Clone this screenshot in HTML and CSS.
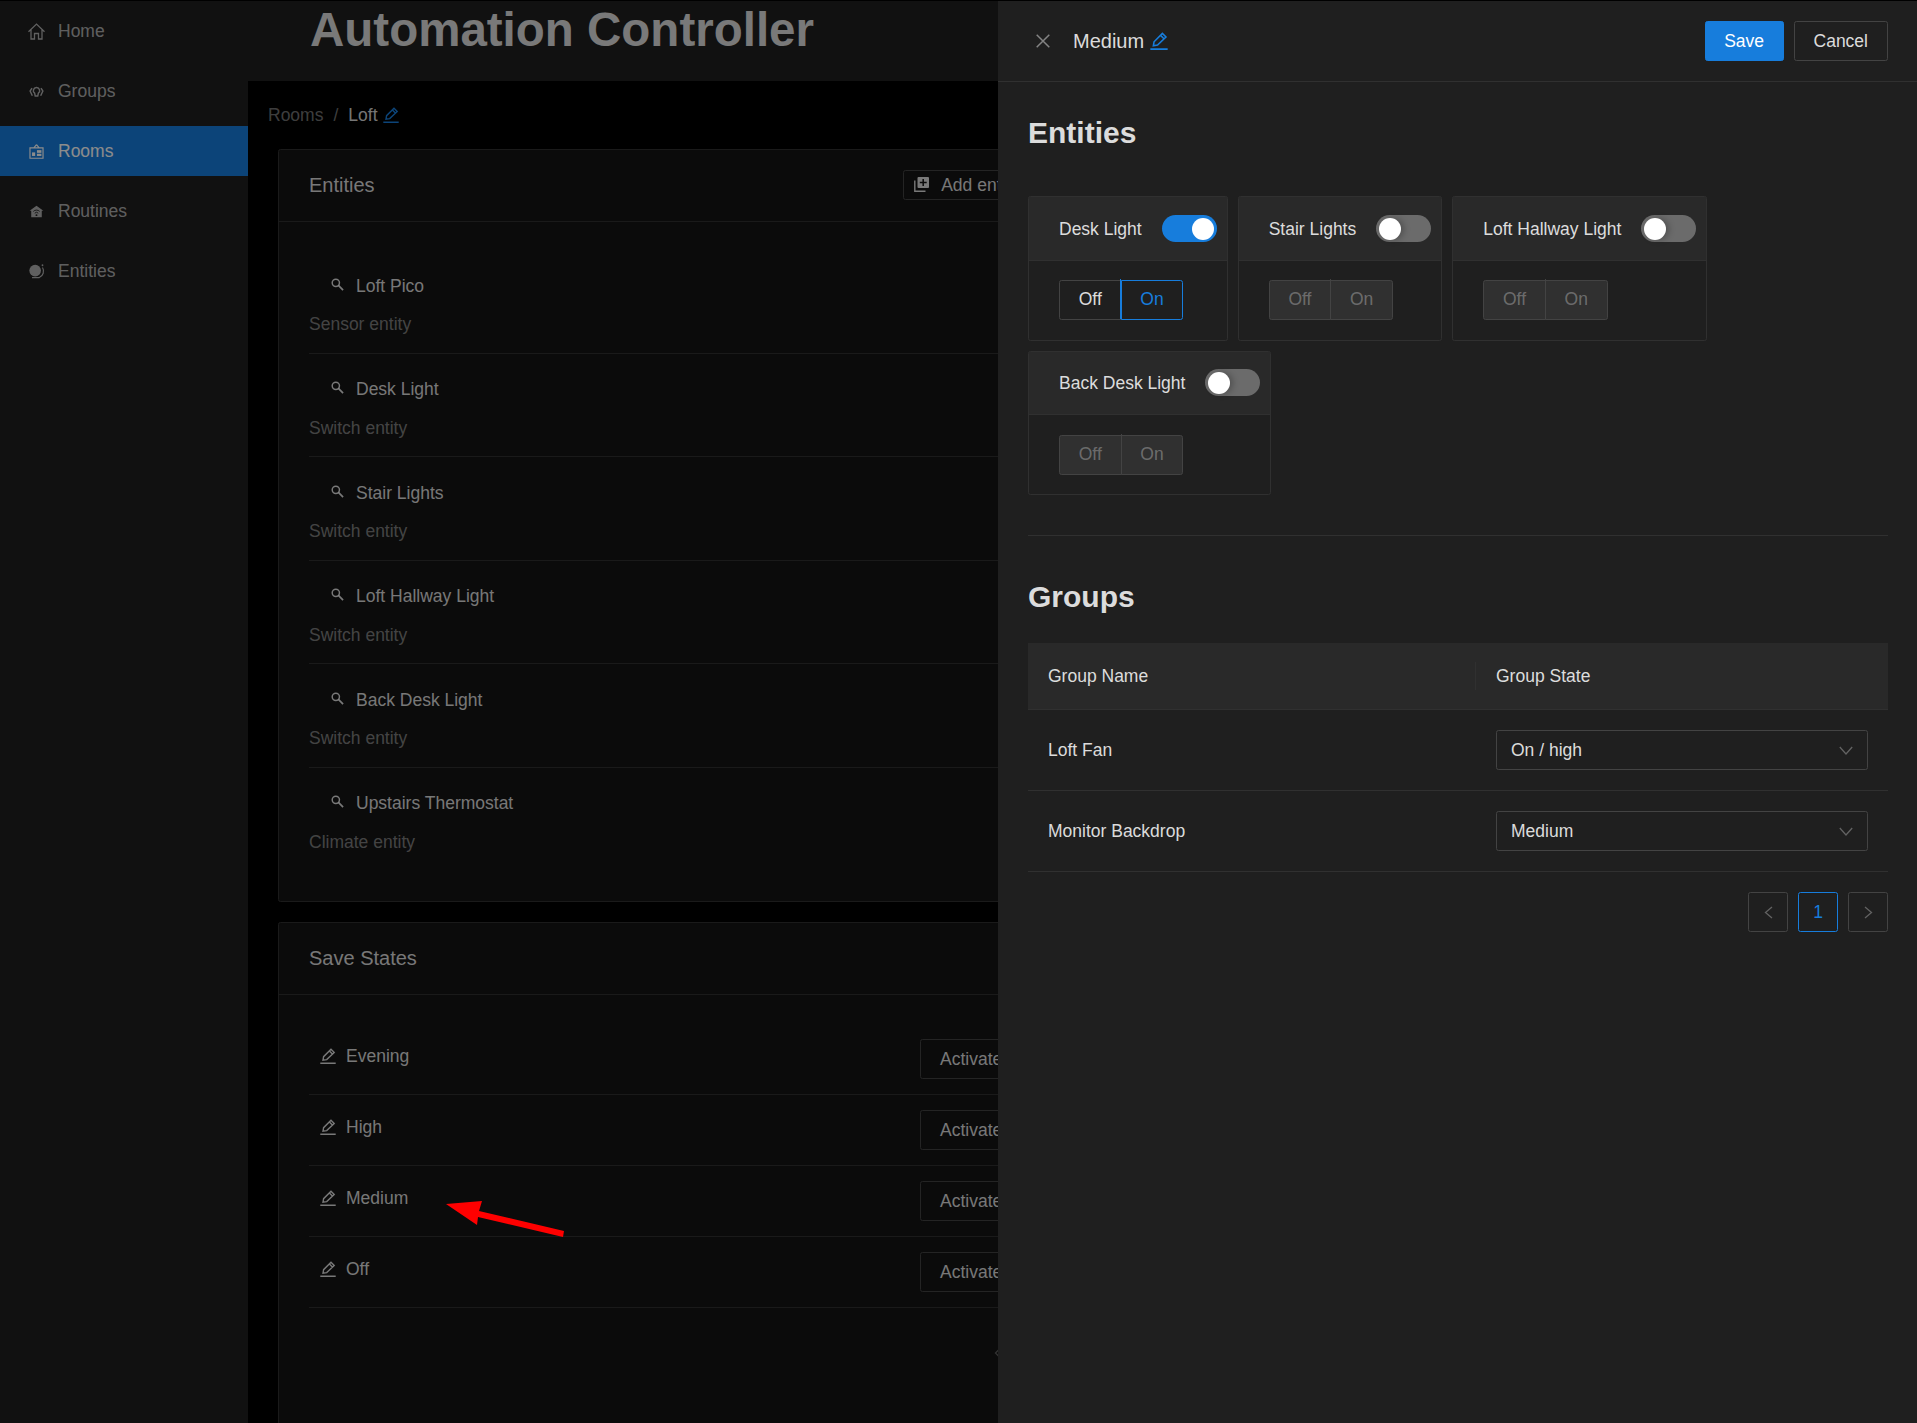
FILE: index.html
```html
<!DOCTYPE html>
<html lang="en">
<head>
  <meta charset="UTF-8">
  <meta name="viewport" content="width=device-width, initial-scale=1.0">
  <title>Automation Controller</title>
  <link rel="stylesheet" href="styles.css">
</head>
<body>

  <svg class="icon-defs" width="0" height="0">
    <symbol id="pencil" viewBox="0 0 16 16">
      <path d="M3 12.2 L3.6 8.7 L11 1.2 L14.2 4.4 L6.7 11.6 Z M9.4 3 L12.4 6 M0.3 15.2 H15.7" fill="none" stroke="currentColor" stroke-width="1.4"/>
    </symbol>
    <symbol id="search" viewBox="0 0 14 14">
      <circle cx="5.2" cy="5.2" r="3.9" fill="none" stroke="currentColor" stroke-width="1.6"/>
      <path d="M8 8 L13 13" stroke="currentColor" stroke-width="1.9"/>
    </symbol>
  </svg>

  <div class="page">
    <!-- left menu -->
    <nav class="sidebar">
      <a class="menu-item">
        <svg class="menu-icon" viewBox="0.5 0.5 17 17"><path d="M1 9.2 L9 1.6 L17 9.2 M3.5 7 V16.5 H7 V11 H11 V16.5 H14.5 V7" fill="none" stroke="currentColor" stroke-width="1.3"/></svg>
        Home
      </a>
      <a class="menu-item">
        <svg class="menu-icon" viewBox="-1.5 -4.5 20 20"><path d="M8.5 0.8 a3.7 3.7 0 0 0 -2.2 6.7 L7 10.8 H10 L10.7 7.5 A3.7 3.7 0 0 0 8.5 0.8 Z M3.2 1.5 L1 5 L3.6 10.5 M13.8 1.5 L16 5 L13.4 10.5" fill="none" stroke="currentColor" stroke-width="1.7"/></svg>
        Groups
      </a>
      <a class="menu-item active">
        <svg class="menu-icon" viewBox="-1 -1 19 19"><path d="M8.5 0.8 L5.5 4.5 M8.5 0.8 L11.5 4.5 M1.2 4.5 H15.8 V16 H1.2 Z" fill="none" stroke="currentColor" stroke-width="1.3"/><rect x="3.5" y="9.5" width="3.5" height="4" fill="currentColor"/><rect x="9" y="7" width="5" height="3" fill="currentColor"/><rect x="9" y="11" width="5" height="2.5" fill="currentColor"/></svg>
        Rooms
      </a>
      <a class="menu-item">
        <svg class="menu-icon" viewBox="-2 -3 21 21"><path d="M8.5 0.5 L17 6.5 H15 V14.5 H2 V6.5 H0 Z" fill="currentColor"/><path d="M4.6 7.4 a5.5 5.5 0 0 1 7.8 0 M6.3 9.6 a3 3 0 0 1 4.4 0" fill="none" stroke="#1f1f1f" stroke-width="1.1"/><circle cx="8.5" cy="12" r="1.2" fill="#1f1f1f"/></svg>
        Routines
      </a>
      <a class="menu-item">
        <svg class="menu-icon" viewBox="-1 -1 19 19"><circle cx="7" cy="7.5" r="6.5" fill="currentColor"/><circle cx="15.2" cy="1.5" r="1" fill="currentColor"/><path d="M15.2 4 a7.8 7.8 0 0 1 -3.6 11.3 H3.5" fill="none" stroke="currentColor" stroke-width="1.3"/></svg>
        Entities
      </a>
    </nav>

    <div class="main">
      <header class="app-header">
        <h1>Automation Controller</h1>
      </header>

      <main class="content">
        <div class="breadcrumb">
          <span class="crumb-parent">Rooms</span>
          <span class="crumb-sep">/</span>
          <span class="crumb-current">Loft</span>
          <svg class="pencil link"><use href="#pencil"/></svg>
        </div>

        <section class="card">
          <div class="card-head">
            <span>Entities</span>
            <button class="btn-small">
              <svg class="add-icon" viewBox="0 0 15 15"><path d="M3.5 1 a1 1 0 0 1 1-1 H14 a1 1 0 0 1 1 1 V10 a1 1 0 0 1 -1 1 H4.5 a1 1 0 0 1 -1-1 Z" fill="currentColor"/><path d="M9.2 2 V9 M5.8 5.5 H12.7" stroke="#141414" stroke-width="1.5"/><path d="M0.8 3.5 V14.2 H11.5" fill="none" stroke="currentColor" stroke-width="1.4"/></svg>
              Add entity
            </button>
          </div>
          <div class="card-body entity-list">
            <div class="entity-row">
              <div class="entity-name"><svg class="search"><use href="#search"/></svg>Loft Pico</div>
              <div class="entity-type">Sensor entity</div>
            </div>
            <div class="entity-row">
              <div class="entity-name"><svg class="search"><use href="#search"/></svg>Desk Light</div>
              <div class="entity-type">Switch entity</div>
            </div>
            <div class="entity-row">
              <div class="entity-name"><svg class="search"><use href="#search"/></svg>Stair Lights</div>
              <div class="entity-type">Switch entity</div>
            </div>
            <div class="entity-row">
              <div class="entity-name"><svg class="search"><use href="#search"/></svg>Loft Hallway Light</div>
              <div class="entity-type">Switch entity</div>
            </div>
            <div class="entity-row">
              <div class="entity-name"><svg class="search"><use href="#search"/></svg>Back Desk Light</div>
              <div class="entity-type">Switch entity</div>
            </div>
            <div class="entity-row last">
              <div class="entity-name"><svg class="search"><use href="#search"/></svg>Upstairs Thermostat</div>
              <div class="entity-type">Climate entity</div>
            </div>
          </div>
        </section>

        <section class="card states-card">
          <div class="card-head"><span>Save States</span></div>
          <div class="card-body state-list">
            <div class="state-row">
              <div class="state-name"><svg class="pencil"><use href="#pencil"/></svg>Evening</div>
              <button class="btn-activate">Activate</button>
            </div>
            <div class="state-row">
              <div class="state-name"><svg class="pencil"><use href="#pencil"/></svg>High</div>
              <button class="btn-activate">Activate</button>
            </div>
            <div class="state-row">
              <div class="state-name"><svg class="pencil"><use href="#pencil"/></svg>Medium</div>
              <button class="btn-activate">Activate</button>
            </div>
            <div class="state-row">
              <div class="state-name"><svg class="pencil"><use href="#pencil"/></svg>Off</div>
              <button class="btn-activate">Activate</button>
            </div>
            <svg class="stub-chevron" viewBox="0 0 8 12"><path d="M6.5 1 L1.5 6 L6.5 11" fill="none" stroke="currentColor" stroke-width="1.4"/></svg>
          </div>
        </section>
      </main>
    </div>

    <div class="mask"></div>

    <!-- annotation on top of the dimmed page -->
    <svg class="arrow" viewBox="0 0 120 40" width="120" height="40">
      <path d="M1 4 L37 1 L34 11 L119 31 L118 37 L33 17 L32 25 Z" fill="#ff0000"/>
    </svg>

    <!-- drawer -->
    <aside class="drawer">
      <div class="drawer-head">
        <div class="drawer-title">
          <svg class="close-icon" viewBox="0 0 14 14"><path d="M0.7 0.7 L13.3 13.3 M13.3 0.7 L0.7 13.3" stroke="currentColor" stroke-width="1.5"/></svg>
          <span>Medium</span>
          <svg class="pencil title-pencil"><use href="#pencil"/></svg>
        </div>
        <div class="drawer-actions">
          <button class="btn btn-primary">Save</button>
          <button class="btn">Cancel</button>
        </div>
      </div>

      <div class="drawer-body">
        <h2 class="first-title">Entities</h2>
        <div class="tiles">
          <div class="tile">
            <div class="tile-head">
              <span>Desk Light</span>
              <span class="switch on"><span class="knob"></span></span>
            </div>
            <div class="tile-body">
              <div class="radio-group">
                <span class="radio">Off</span>
                <span class="radio radio-selected">On</span>
              </div>
            </div>
          </div>
          <div class="tile">
            <div class="tile-head">
              <span>Stair Lights</span>
              <span class="switch"><span class="knob"></span></span>
            </div>
            <div class="tile-body">
              <div class="radio-group disabled">
                <span class="radio">Off</span>
                <span class="radio">On</span>
              </div>
            </div>
          </div>
          <div class="tile">
            <div class="tile-head">
              <span>Loft Hallway Light</span>
              <span class="switch"><span class="knob"></span></span>
            </div>
            <div class="tile-body">
              <div class="radio-group disabled">
                <span class="radio">Off</span>
                <span class="radio">On</span>
              </div>
            </div>
          </div>
          <div class="tile">
            <div class="tile-head">
              <span>Back Desk Light</span>
              <span class="switch"><span class="knob"></span></span>
            </div>
            <div class="tile-body">
              <div class="radio-group disabled">
                <span class="radio">Off</span>
                <span class="radio">On</span>
              </div>
            </div>
          </div>
        </div>

        <hr class="divider">

        <h2>Groups</h2>
        <table class="groups">
          <thead>
            <tr>
              <th class="col-name">Group Name</th>
              <th class="col-state">Group State</th>
            </tr>
          </thead>
          <tbody>
            <tr>
              <td>Loft Fan</td>
              <td>
                <div class="select">On / high
                  <svg class="select-arrow" viewBox="0 0 14 9"><path d="M0.8 1 L7 8 L13.2 1" fill="none" stroke="currentColor" stroke-width="1.3"/></svg>
                </div>
              </td>
            </tr>
            <tr>
              <td>Monitor Backdrop</td>
              <td>
                <div class="select">Medium
                  <svg class="select-arrow" viewBox="0 0 14 9"><path d="M0.8 1 L7 8 L13.2 1" fill="none" stroke="currentColor" stroke-width="1.3"/></svg>
                </div>
              </td>
            </tr>
          </tbody>
        </table>

        <div class="pagination">
          <span class="page-btn"><svg viewBox="0 0 9 13"><path d="M8 1 L1.5 6.5 L8 12" fill="none" stroke="currentColor" stroke-width="1.3"/></svg></span>
          <span class="page-btn current">1</span>
          <span class="page-btn"><svg viewBox="0 0 9 13"><path d="M1 1 L7.5 6.5 L1 12" fill="none" stroke="currentColor" stroke-width="1.3"/></svg></span>
        </div>
      </div>
    </aside>
  </div>

</body>
</html>
```

FILE: styles.css
```css
* {
  box-sizing: border-box;
}
html, body {
  margin: 0;
  height: 100%;
  overflow: hidden;
}
body {
  font-family: "Liberation Sans", Arial, sans-serif;
  font-size: 17.5px;
  line-height: 24px;
  color: rgba(255, 255, 255, 0.85);
  background: #000;
}
button {
  font: inherit;
  color: inherit;
  background: transparent;
}
.icon-defs {
  position: absolute;
}

.page {
  position: relative;
  display: flex;
  height: 1423px;
  border-top: 1px solid #000;
  overflow: hidden;
}

/* left menu */
.sidebar {
  flex: 0 0 248px;
  padding-top: 5px;
  background: #1f1f1f;
}
.menu-item {
  display: flex;
  align-items: center;
  gap: 13px;
  height: 50px;
  margin-bottom: 10px;
  padding-left: 28px;
  color: rgba(255, 255, 255, 0.65);
}
.menu-item.active {
  background: #177ddc;
  color: #fff;
}
.menu-icon {
  width: 17px;
  height: 17px;
  flex: none;
}

/* main column */
.main {
  flex: 1;
  min-width: 0;
}
.app-header {
  height: 80px;
  padding-left: 62px;
  background: #1f1f1f;
}
.app-header h1 {
  margin: 0;
  font-size: 47.5px;
  line-height: 58px;
  font-weight: 700;
}
.content {
  padding: 22px 20px 0;
}
.breadcrumb {
  display: flex;
  align-items: center;
  height: 24px;
  margin-bottom: 22px;
}
.crumb-parent,
.crumb-sep {
  color: rgba(255, 255, 255, 0.45);
}
.crumb-sep {
  margin: 0 10px;
}
.pencil {
  width: 16px;
  height: 16px;
  flex: none;
}
.pencil.link {
  margin-left: 5px;
  color: #177ddc;
}

.card {
  width: 783px;
  margin: 0 0 20px 10px;
  background: #141414;
  border: 1px solid #303030;
  border-radius: 2.5px;
}
.states-card {
  min-height: 700px;
}
.card-head {
  display: flex;
  align-items: center;
  justify-content: space-between;
  height: 72px;
  padding: 0 30px 2px;
  font-size: 20px;
  border-bottom: 1px solid #303030;
}
.states-card .card-head {
  padding-bottom: 1px;
}
.btn-small {
  display: flex;
  align-items: center;
  gap: 12px;
  height: 30px;
  padding: 0 10px;
  font-size: 17.5px;
  border: 1px solid #434343;
  border-radius: 2.5px;
}
.add-icon {
  width: 15px;
  height: 15px;
}

.entity-list {
  padding: 28.3px 30px 29.7px;
}
.entity-row {
  height: 103.5px;
  padding-top: 23.5px;
  border-bottom: 1px solid #303030;
}
.entity-row.last {
  border-bottom: none;
}
.entity-name {
  display: flex;
  align-items: center;
  gap: 12px;
  padding-left: 22px;
}
.search {
  width: 13px;
  height: 13px;
  margin-top: -3px;
  flex: none;
}
.entity-type {
  margin-top: 14.5px;
  color: rgba(255, 255, 255, 0.45);
}

.state-list {
  padding: 29px 30px 0;
}
.state-row {
  display: flex;
  justify-content: space-between;
  height: 71px;
  padding-top: 15px;
  border-bottom: 1px solid #303030;
}
.state-name {
  display: flex;
  align-items: center;
  gap: 10px;
  height: 34px;
  padding-left: 11px;
}
.btn-activate {
  width: 110px;
  height: 40px;
  padding: 0 0 0 19px;
  text-align: left;
  border: 1px solid #434343;
  border-radius: 2.5px;
}
.stub-chevron {
  display: block;
  width: 8px;
  height: 12px;
  margin: 39px 0 0 685px;
  color: rgba(255, 255, 255, 0.3);
}

.mask {
  position: absolute;
  inset: 0;
  background: rgba(0, 0, 0, 0.45);
}
.arrow {
  position: absolute;
  left: 445px;
  top: 1199px;
}

/* drawer */
.drawer {
  position: absolute;
  top: 0;
  right: 0;
  bottom: 0;
  width: 919px;
  background: #1f1f1f;
}
.drawer-head {
  display: flex;
  align-items: center;
  justify-content: space-between;
  height: 81px;
  padding: 0 29px 0 38px;
  border-bottom: 1px solid #303030;
}
.drawer-title {
  display: flex;
  align-items: center;
  font-size: 20px;
}
.close-icon {
  width: 14px;
  height: 14px;
  margin-right: 23px;
  color: rgba(255, 255, 255, 0.45);
}
.title-pencil {
  width: 18px;
  height: 18px;
  margin-left: 6px;
  color: #177ddc;
}
.drawer-actions {
  display: flex;
  gap: 10px;
}
.btn {
  height: 40px;
  padding: 0 19px;
  border: 1px solid #434343;
  border-radius: 2.5px;
}
.btn-primary {
  padding: 0 18.5px;
  background: #177ddc;
  border-color: #177ddc;
  color: #fff;
}

.drawer-body {
  padding: 31px 29px 0 30px;
}
.drawer-body h2 {
  margin: 0 0 25px;
  font-size: 30px;
  line-height: 40.5px;
  font-weight: 700;
}
.drawer-body h2.first-title {
  margin-bottom: 42px;
}
.tiles {
  display: flex;
  flex-wrap: wrap;
  gap: 10px;
}
.tile {
  border: 1px solid #303030;
  border-radius: 2.5px;
}
.tile-head {
  display: flex;
  align-items: center;
  justify-content: space-between;
  gap: 20px;
  height: 64px;
  padding: 1px 10px 0 30px;
  background: #292929;
  border-bottom: 1px solid #303030;
}
.tile:last-child .tile-head {
  height: 63px;
  padding-top: 0;
}
.tile-body {
  padding: 19px 30px 20px;
}
.tile:last-child .tile-body {
  padding: 20px 30px 19px;
}
.switch {
  display: block;
  flex: none;
  width: 55px;
  height: 27px;
  padding: 2.5px;
  background: #6b6b6b;
  border-radius: 14px;
}
.switch.on {
  padding-left: 30px;
  background: #177ddc;
}
.knob {
  display: block;
  width: 22px;
  height: 22px;
  background: #fff;
  border-radius: 50%;
  box-shadow: 3px 0 6px rgba(0, 0, 0, 0.25);
}
.switch.on .knob {
  box-shadow: none;
}
.radio-group {
  display: inline-flex;
  height: 40px;
}
.radio {
  display: flex;
  align-items: center;
  height: 40px;
  padding: 0 18.75px 2px;
  border: 1px solid #434343;
  border-radius: 2.5px 0 0 2.5px;
  white-space: nowrap;
}
.radio + .radio {
  position: relative;
  margin-left: -1px;
  border-radius: 0 2.5px 2.5px 0;
}
/* the seam between the two buttons sticks out a little at the top */
.radio + .radio::before {
  content: "";
  position: absolute;
  left: -1px;
  top: -2px;
  width: 1px;
  height: 2px;
  background: #434343;
}
.radio-selected {
  color: #177ddc;
  border-color: #177ddc;
}
.radio + .radio-selected::before {
  left: -2px;
  height: 40px;
  background: #177ddc;
}
.disabled .radio {
  background: #303030;
  color: rgba(255, 255, 255, 0.3);
}

.divider {
  height: 1px;
  margin: 40.5px 0 41px;
  background: #303030;
  border: none;
}

.groups {
  width: 860px;
  border-collapse: collapse;
  table-layout: fixed;
}
.groups th {
  position: relative;
  height: 67px;
  padding: 0 20px;
  font-weight: 400;
  text-align: left;
  background: #292929;
  border-bottom: 1px solid #303030;
}
.col-name {
  width: 448px;
}
.col-state::before {
  content: "";
  position: absolute;
  left: -1px;
  top: 19px;
  bottom: 19px;
  width: 1px;
  background: #303030;
}
.groups td {
  height: 81px;
  padding: 20px;
  border-bottom: 1px solid #303030;
}
.select {
  display: flex;
  align-items: center;
  justify-content: space-between;
  height: 40px;
  padding: 0 14px;
  border: 1px solid #434343;
  border-radius: 2.5px;
}
.select-arrow {
  width: 14px;
  height: 9px;
  color: rgba(255, 255, 255, 0.3);
}

.pagination {
  display: flex;
  justify-content: flex-end;
  gap: 10px;
  margin-top: 20px;
}
.page-btn {
  display: flex;
  align-items: center;
  justify-content: center;
  width: 40px;
  height: 40px;
  color: rgba(255, 255, 255, 0.3);
  border: 1px solid #434343;
  border-radius: 2.5px;
}
.page-btn svg {
  width: 9px;
  height: 13px;
}
.page-btn.current {
  color: #177ddc;
  border-color: #177ddc;
}
```
